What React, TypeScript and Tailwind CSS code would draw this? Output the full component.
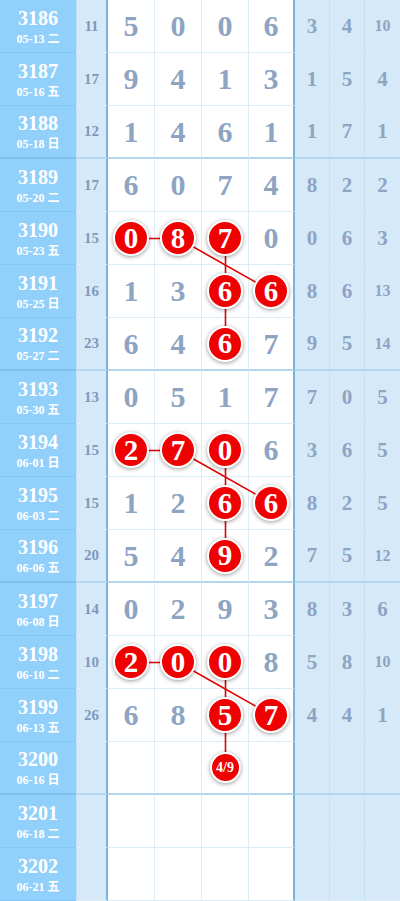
import React from "react";

type Row = {
  issue: string;
  date: string;
  week: string;
  sum?: number;
  nums: (number | string | null)[];
  hits: number[];
  tail: number[];
};

const rows: Row[] = [
  { issue: "3186", date: "05-13", week: "二", sum: 11, nums: [5, 0, 0, 6], hits: [], tail: [3, 4, 10] },
  { issue: "3187", date: "05-16", week: "五", sum: 17, nums: [9, 4, 1, 3], hits: [], tail: [1, 5, 4] },
  { issue: "3188", date: "05-18", week: "日", sum: 12, nums: [1, 4, 6, 1], hits: [], tail: [1, 7, 1] },
  { issue: "3189", date: "05-20", week: "二", sum: 17, nums: [6, 0, 7, 4], hits: [], tail: [8, 2, 2] },
  { issue: "3190", date: "05-23", week: "五", sum: 15, nums: [0, 8, 7, 0], hits: [0, 1, 2], tail: [0, 6, 3] },
  { issue: "3191", date: "05-25", week: "日", sum: 16, nums: [1, 3, 6, 6], hits: [2, 3], tail: [8, 6, 13] },
  { issue: "3192", date: "05-27", week: "二", sum: 23, nums: [6, 4, 6, 7], hits: [2], tail: [9, 5, 14] },
  { issue: "3193", date: "05-30", week: "五", sum: 13, nums: [0, 5, 1, 7], hits: [], tail: [7, 0, 5] },
  { issue: "3194", date: "06-01", week: "日", sum: 15, nums: [2, 7, 0, 6], hits: [0, 1, 2], tail: [3, 6, 5] },
  { issue: "3195", date: "06-03", week: "二", sum: 15, nums: [1, 2, 6, 6], hits: [2, 3], tail: [8, 2, 5] },
  { issue: "3196", date: "06-06", week: "五", sum: 20, nums: [5, 4, 9, 2], hits: [2], tail: [7, 5, 12] },
  { issue: "3197", date: "06-08", week: "日", sum: 14, nums: [0, 2, 9, 3], hits: [], tail: [8, 3, 6] },
  { issue: "3198", date: "06-10", week: "二", sum: 10, nums: [2, 0, 0, 8], hits: [0, 1, 2], tail: [5, 8, 10] },
  { issue: "3199", date: "06-13", week: "五", sum: 26, nums: [6, 8, 5, 7], hits: [2, 3], tail: [4, 4, 1] },
  { issue: "3200", date: "06-16", week: "日", nums: [null, null, "4/9", null], hits: [2], tail: [] },
  { issue: "3201", date: "06-18", week: "二", nums: [null, null, null, null], hits: [], tail: [] },
  { issue: "3202", date: "06-21", week: "五", nums: [null, null, null, null], hits: [], tail: [] },
];

const ROW_H = 53;
const colX = [131.5, 178.5, 225.5, 272];
const cy = (r: number) => r * ROW_H + 26.5;

// links between hit balls: [col, row] -> [col, row]
const links: [number, number, number, number][] = [];
[4, 8, 12].forEach((r) => {
  links.push([0, r, 1, r]);
  links.push([1, r, 3, r + 1]);
  links.push([2, r, 2, r + 1]);
  links.push([2, r + 1, 2, r + 2]);
});

const serif = "font-['Liberation_Serif','Times_New_Roman',serif]";

const Ball = ({ v }: { v: number | string }) => {
  const small = typeof v === "string";
  return (
    <div
      className={`relative z-10 flex items-center justify-center rounded-full bg-[#f00000] border-2 border-white text-white font-bold shadow-[0_1px_4px_rgba(0,0,0,0.4)] ${
        small ? "w-[31px] h-[31px] text-[14px]" : "w-[36px] h-[36px] text-[29px]"
      }`}
    >
      <span className="leading-none">{v}</span>
    </div>
  );
};

export default function App() {
  return (
    <div className={`relative w-[400px] h-[901px] overflow-hidden bg-white ${serif}`}>
      <svg className="absolute inset-0 z-[5] pointer-events-none" width={400} height={901}>
        {links.map(([c1, r1, c2, r2], i) => (
          <line
            key={i}
            x1={colX[c1]}
            y1={cy(r1)}
            x2={colX[c2]}
            y2={cy(r2)}
            stroke="#e00000"
            strokeWidth={1.6}
          />
        ))}
      </svg>

      {rows.map((row, ri) => {
        const groupEnd = ri === 2 || ri === 6 || ri === 10 || ri === 14;
        const hb = groupEnd ? "border-b-2 border-b-[#b3d5ee]" : "border-b border-b-[#dcecf7]";
        const pb = groupEnd ? "border-b-2 border-b-[#7fc0ee]" : "border-b border-b-[#84c5f3]";
        return (
          <div
            key={row.issue}
            className="grid grid-cols-[76px_32px_47px_47px_47px_46px_35px_35px_35px] h-[53px]"
          >
            <div className={`flex flex-col items-center justify-center bg-[#92d0fc] text-white font-bold ${pb}`}>
              <span className="text-[20px] leading-[22px]">{row.issue}</span>
              <span className="text-[12px] leading-[14px] mt-[2px]">
                {row.date}{" "}
                <span className="font-['Noto_Sans_CJK_SC',sans-serif] font-bold">{row.week}</span>
              </span>
            </div>
            <div
              className={`flex items-center justify-center bg-[#d6e9f9] border-l border-l-[#c3e0f6] border-r-2 border-r-[#7ab4dd] text-[#7f99ba] font-bold text-[15px] ${hb}`}
            >
              {row.sum ?? ""}
            </div>
            {row.nums.map((n, ci) => (
              <div
                key={ci}
                className={`flex items-center justify-center ${ci === 3 ? "border-r-2 border-r-[#7ab4dd]" : "border-r border-r-[#dcecf7]"} ${hb}`}
              >
                {n === null ? null : row.hits.includes(ci) ? (
                  <Ball v={n} />
                ) : (
                  <span className="text-[30px] font-bold text-[#8ea4c3] leading-none">{n}</span>
                )}
              </div>
            ))}
            {[0, 1, 2].map((ti) => {
              const t = row.tail[ti];
              return (
                <div
                  key={ti}
                  className={`flex items-center justify-center bg-[#d6e9f9] ${ti < 2 ? "border-r border-r-[#c3e0f6]" : ""} ${hb}`}
                >
                  {t !== undefined && (
                    <span className={`font-bold text-[#8ea4c3] leading-none ${t >= 10 ? "text-[16px]" : "text-[21px]"}`}>
                      {t}
                    </span>
                  )}
                </div>
              );
            })}
          </div>
        );
      })}
    </div>
  );
}
